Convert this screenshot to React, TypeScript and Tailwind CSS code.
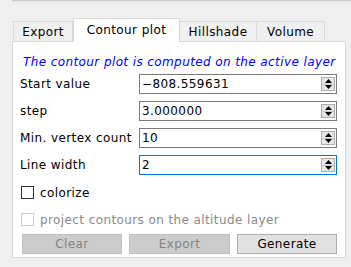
import React from 'react';

const TABS = [
  { label: 'Export', w: 'w-[60px]' },
  { label: 'Contour plot', w: 'w-[107px]', active: true },
  { label: 'Hillshade', w: 'w-[78px]' },
  { label: 'Volume', w: 'w-[69px]' },
];

const FIELDS = [
  { label: 'Start value', value: '−808.559631' },
  { label: 'step', value: '3.000000' },
  { label: 'Min. vertex count', value: '10' },
  { label: 'Line width', value: '2', focused: true },
];

function Spinner() {
  return (
    <div className="absolute right-[1px] top-[2px] bottom-[2px] w-[14px] flex flex-col border border-[#adadad] bg-[#e6e6e6]">
      <div className="flex-1 flex items-center justify-center border-b border-[#c8c8c8]">
        <svg width="7" height="4" viewBox="0 0 7 4"><path d="M3.5 0L7 4H0z" fill="#000" /></svg>
      </div>
      <div className="flex-1 flex items-center justify-center">
        <svg width="7" height="4" viewBox="0 0 7 4"><path d="M0 0h7L3.5 4z" fill="#000" /></svg>
      </div>
    </div>
  );
}

function Field({ label, value, focused }: { label: string; value: string; focused?: boolean }) {
  return (
    <div className="flex items-center h-[20px]">
      <span className="w-[119px] text-[12px] text-black whitespace-nowrap">{label}</span>
      <div
        className={`relative w-[198px] h-[20px] bg-white border flex items-center pl-[2px] ${
          focused ? 'border-[#0078d7]' : 'border-[#7a7a7a]'
        }`}
      >
        <span className="text-[12px] text-black">{value}</span>
        <Spinner />
      </div>
    </div>
  );
}

export default function App() {
  return (
    <div
      className="w-[351px] h-[267px] bg-[#f0f0f0] relative overflow-hidden tracking-[0.4px]"
      style={{ fontFamily: '"DejaVu Sans", sans-serif' }}
    >
      <div className="ml-[12px] h-[2px] border-t border-[#c8c8c8] bg-[#e6e6e6]" />

      {/* tab strip */}
      <div className="flex items-end ml-[13px] mt-[15px] h-[24px] relative z-10">
        {TABS.map((t) =>
          t.active ? (
            <div
              key={t.label}
              className={`${t.w} h-[24px] bg-white border border-b-0 border-[#d9d9d9] flex items-center justify-center text-[12px] text-black -mb-[1px] pb-[2px]`}
            >
              {t.label}
            </div>
          ) : (
            <div
              key={t.label}
              className={`${t.w} h-[20px] bg-[#f0f0f0] border border-b-0 border-[#d9d9d9] -ml-[1px] first:ml-0 flex items-center justify-center text-[12px] text-black`}
            >
              {t.label}
            </div>
          ),
        )}
      </div>

      {/* pane */}
      <div className="ml-[12px] w-[334px] h-[217px] bg-white border border-[#d9d9d9] pl-[7px] pt-[13px]">
        <div className="pl-[3px] text-[12px] italic text-[#0000ff] leading-[14px] whitespace-nowrap">
          The contour plot is computed on the active layer
        </div>
        <div className="mt-[5px] flex flex-col gap-[7px]">
          {FIELDS.map((f) => (
            <Field key={f.label} {...f} />
          ))}
        </div>

        <div className="mt-[11px] flex items-center h-[13px] pl-[1px]">
          <div className="w-[13px] h-[13px] border border-[#333] bg-white" />
          <span className="ml-[6px] text-[12px] text-black">colorize</span>
        </div>
        <div className="mt-[14px] flex items-center h-[13px] pl-[1px]">
          <div className="w-[13px] h-[13px] border border-[#cccccc] bg-white" />
          <span className="ml-[6px] text-[12px] text-[#8a8a8a] whitespace-nowrap">
            project contours on the altitude layer
          </span>
        </div>

        <div className="mt-[8px] flex gap-[7px] pl-[2px]">
          <div className="w-[100px] h-[20px] bg-[#cccccc] border border-[#bfbfbf] flex items-center justify-center text-[12px] text-[#838383]">
            Clear
          </div>
          <div className="w-[101px] h-[20px] bg-[#cccccc] border border-[#bfbfbf] flex items-center justify-center text-[12px] text-[#838383]">
            Export
          </div>
          <div className="w-[100px] h-[20px] bg-[#e1e1e1] border border-[#adadad] flex items-center justify-center text-[12px] text-black">
            Generate
          </div>
        </div>
      </div>
    </div>
  );
}
